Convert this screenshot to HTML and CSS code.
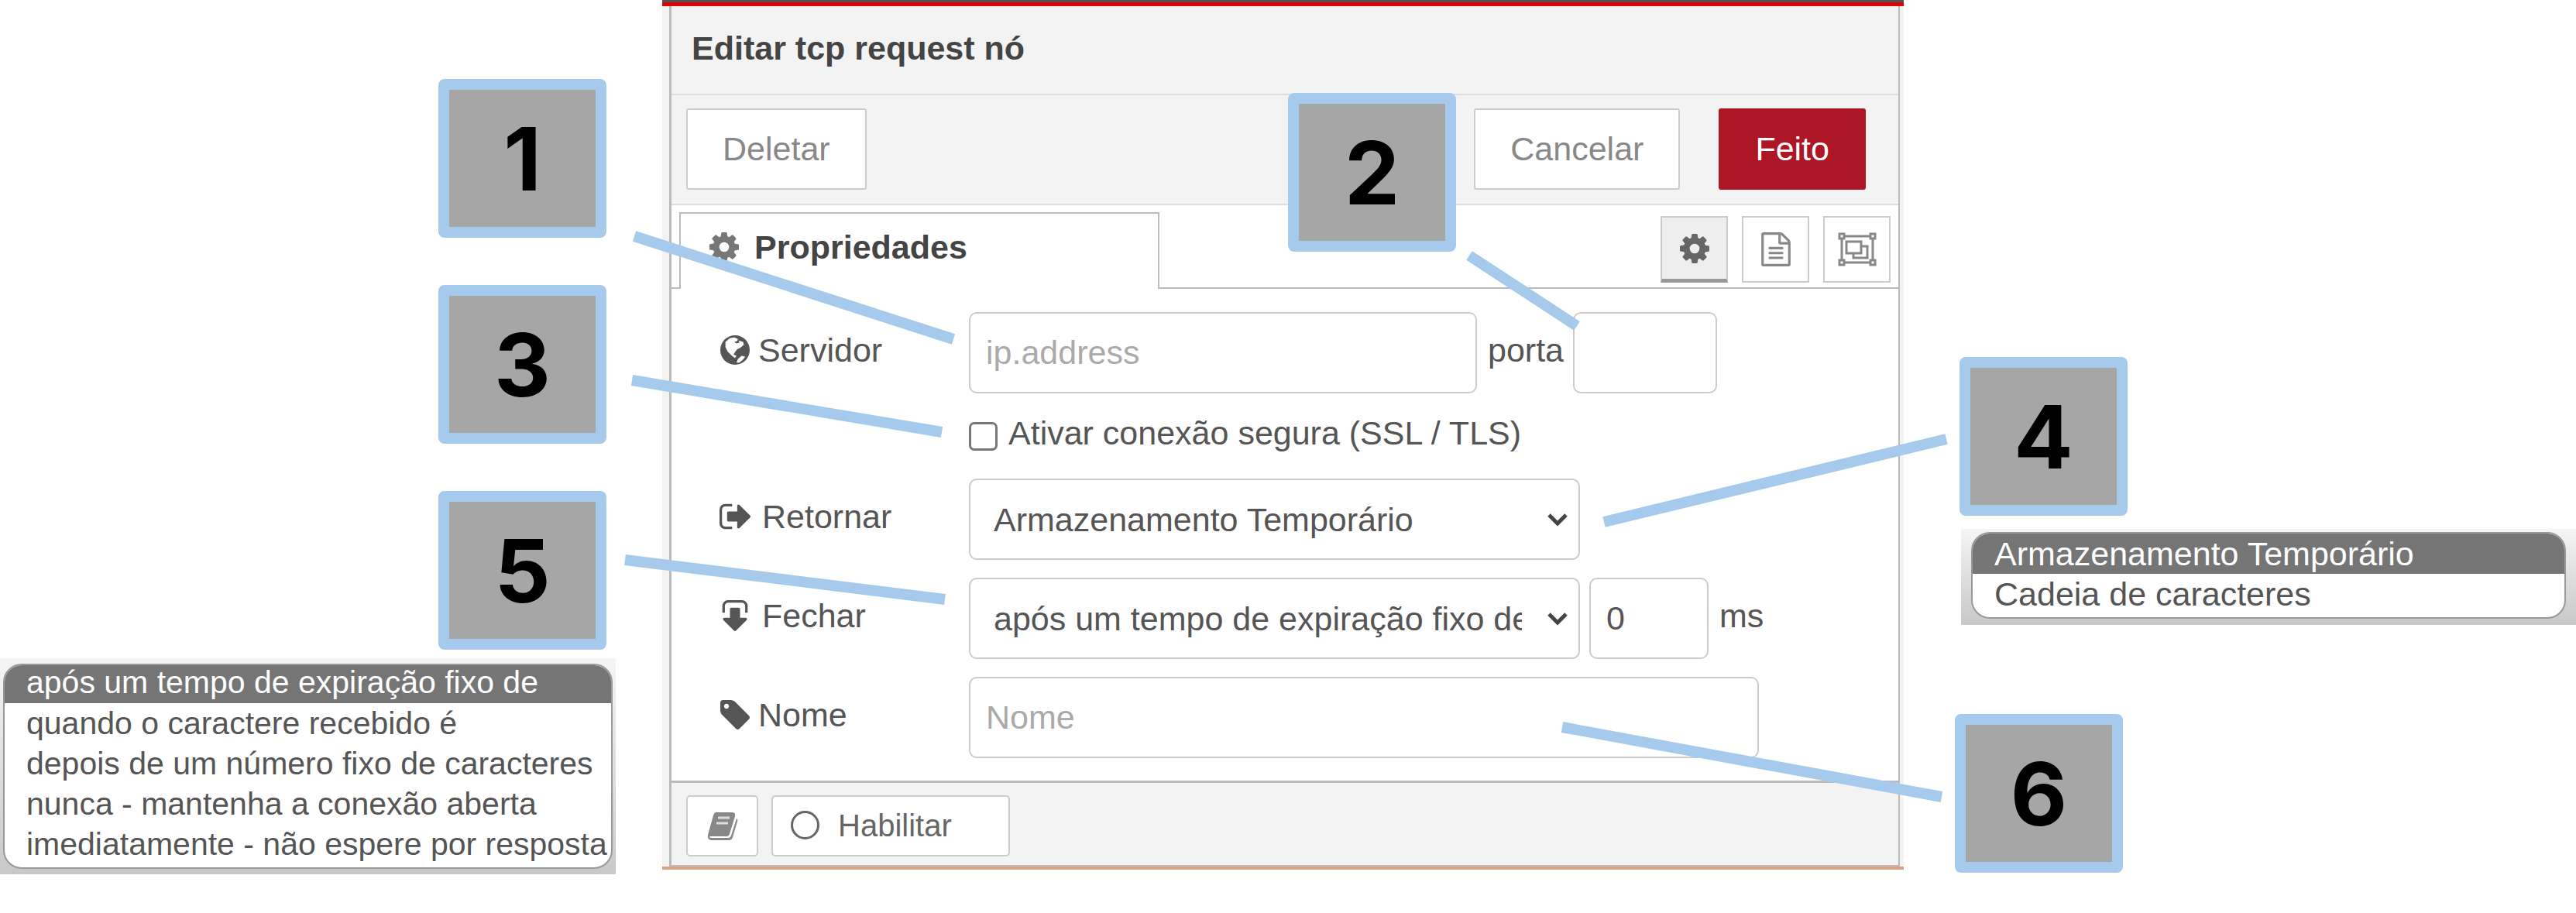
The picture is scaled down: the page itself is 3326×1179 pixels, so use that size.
FILE: index.html
```html
<!DOCTYPE html>
<html lang="pt-BR">
<head>
<meta charset="utf-8">
<title>Editar tcp request nó</title>
<link rel="stylesheet" href="styles.css">
</head>
<body>
<svg class="sprite" aria-hidden="true">
  <symbol id="cog" viewBox="128 128 1536 1536"><path d="M1152 896q0-106-75-181t-181-75-181 75-75 181 75 181 181 75 181-75 75-181zm512-109v222q0 12-8 23t-20 13l-185 28q-19 54-39 91 35 50 107 138 10 12 10 25t-9 23q-27 37-99 108t-94 71q-12 0-26-9l-138-108q-44 23-91 38-16 136-29 186-7 28-36 28h-222q-14 0-24.500-8.500t-11.500-21.500l-28-184q-49-16-90-37l-141 107q-10 9-25 9-14 0-25-11-126-114-165-168-7-10-7-23 0-12 8-23 15-21 51-66.500t54-70.500q-27-50-41-99l-183-27q-13-2-21-12.500t-8-23.500v-222q0-12 8-23t19-13l186-28q14-46 39-92-40-57-107-138-10-12-10-24 0-10 9-23 26-36 98.500-107.500t94.500-71.500q13 0 26 10l138 107q44-23 91-38 16-136 29-186 7-28 36-28h222q14 0 24.500 8.500t11.500 21.500l28 184q49 16 90 37l142-107q9-9 24-9 13 0 25 10 129 119 165 170 7 8 7 22 0 12-8 23-15 21-51 66.500t-54 70.500q26 50 41 98l183 28q13 2 21 12.500t8 23.500z"/></symbol>
  <symbol id="file" viewBox="128 0 1536 1792"><path d="M1596 380q28 28 48 76t20 88v1152q0 40-28 68t-68 28h-1344q-40 0-68-28t-28-68v-1600q0-40 28-68t68-28h896q40 0 88 20t76 48zm-444-244v376h376q-10-29-22-41l-313-313q-12-12-41-22zm384 1528v-1024h-416q-40 0-68-28t-28-68v-416h-768v1536h1280zm-1024-864q0-14 9-23t23-9h704q14 0 23 9t9 23v64q0 14-9 23t-23 9h-704q-14 0-23-9t-9-23v-64zm736 224q14 0 23 9t9 23v64q0 14-9 23t-23 9h-704q-14 0-23-9t-9-23v-64q0-14 9-23t23-9h704zm0 256q14 0 23 9t9 23v64q0 14-9 23t-23 9h-704q-14 0-23-9t-9-23v-64q0-14 9-23t23-9h704z"/></symbol>
  <symbol id="group" viewBox="0 0 50 44"><g fill="none" stroke="currentColor" stroke-width="3"><path d="M8 5H42M8 39H42M5 8V36M45 8V36"/><path d="M11 12H30V27H11Z"/><path d="M30 18H38V33H20V27"/><path d="M2 2H8V8H2ZM42 2H48V8H42ZM2 36H8V42H2ZM42 36H48V42H42Z" fill="#fff"/></g></symbol>
  <symbol id="globe" viewBox="0 0 40 40"><circle cx="20" cy="20" r="20"/><path fill="#fff" d="M7 9L13 4L19 3L24 5L23 8L19 9L22 11L26 10L25 7L31 9L32 13L27 17L23 19L20 23L18 26L22 28L20 31L15 27L10 22L7 16ZM24 32L29 28L34 29L31 33L26 37L22 37Z"/></symbol>
  <symbol id="out" viewBox="64 192 1568 1408"><path d="M704 1440q0 4 1 20t.5 26.500-3 23.500-10 19.500-20.500 6.500h-320q-119 0-203.500-84.500t-84.500-203.500v-704q0-119 84.500-203.500t203.500-84.500h320q13 0 22.500 9.500t9.500 22.500q0 4 1 20t.5 26.500-3 23.500-10 19.500-20.500 6.500h-320q-66 0-113 47t-47 113v704q0 66 47 113t113 47h312l11.500 1 11.500 3 8 5.500 7 9 2 13.500zm928-544q0 26-19 45l-544 544q-19 19-45 19t-45-19-19-45v-288h-448q-26 0-45-19t-19-45v-384q0-26 19-45t45-19h448v-288q0-26 19-45t45-19 45 19l544 544q19 19 19 45z"/></symbol>
  <symbol id="tag" viewBox="128 128 1516 1516"><path d="M576 448q0-53-37.500-90.500t-90.500-37.500-90.500 37.500-37.500 90.500 37.500 90.500 90.500 37.500 90.500-37.500 37.500-90.500zm1067 576q0 53-37 90l-491 492q-39 37-91 37-53 0-90-37l-715-716q-38-37-64.500-101t-26.500-117v-416q0-52 38-90t90-38h416q53 0 117 26.500t102 64.500l715 714q37 39 37 91z"/></symbol>
  <symbol id="book" viewBox="0 0 40 36"><path d="M12 0H32Q37 0 36 5L29 28Q28 31 25 31H5Q3 31 3 32Q4 33 6 33H27Q30 33 31 30L38 8Q40 9 39 12L33 32Q32 36 28 36H5Q0 35 1 29L8 4Q9 0 12 0Z"/><path d="M14 7H29M12 14H27" stroke="#ddd" stroke-width="3"/></symbol>
</svg>

<div class="figure">
  <aside class="side side-left">
    <div class="badge">1</div>
    <div class="badge">3</div>
    <div class="badge badge-last">5</div>
    <div class="popup popup-left">
      <ul class="options" role="listbox" aria-label="Fechar">
        <li role="option" aria-selected="true">após um tempo de expiração fixo de</li>
        <li role="option">quando o caractere recebido é</li>
        <li role="option">depois de um número fixo de caracteres</li>
        <li role="option">nunca - mantenha a conexão aberta</li>
        <li role="option">imediatamente - não espere por resposta</li>
      </ul>
    </div>
  </aside>

  <main class="editor">
    <form class="tray">
      <h1 class="title">Editar tcp request nó</h1>
      <div class="toolbar">
        <button type="button" class="btn btn-delete">Deletar</button>
        <button type="button" class="btn">Cancelar</button>
        <button type="button" class="btn btn-primary">Feito</button>
      </div>
      <div class="tabs">
        <div class="tab"><svg class="icon"><use href="#cog"/></svg>Propriedades</div>
        <div class="tab-buttons">
          <button type="button" class="tab-button active" aria-label="Propriedades"><svg class="icon"><use href="#cog"/></svg></button>
          <button type="button" class="tab-button" aria-label="Descrição"><svg class="icon icon-file"><use href="#file"/></svg></button>
          <button type="button" class="tab-button" aria-label="Aparência"><svg class="icon icon-group"><use href="#group"/></svg></button>
        </div>
      </div>
      <div class="fields">
        <div class="row">
          <label class="label" for="server"><svg class="icon"><use href="#globe"/></svg>Servidor</label>
          <input class="control server" id="server" type="text" placeholder="ip.address">
          <label class="inline" for="port">porta</label>
          <input class="control port" id="port" type="text">
        </div>
        <div class="row row-check">
          <input class="check" id="tls" type="checkbox">
          <label class="check-label" for="tls">Ativar conexão segura (SSL / TLS)</label>
        </div>
        <div class="row">
          <label class="label label-wide" for="ret"><svg class="icon icon-out"><use href="#out"/></svg>Retornar</label>
          <div class="select">
            <select class="control" id="ret"><option>Armazenamento Temporário</option><option>Cadeia de caracteres</option></select>
            <svg class="chevron" viewBox="0 0 28 18"><path d="M3 3L14 14L25 3"/></svg>
          </div>
        </div>
        <div class="row">
          <label class="label label-wide" for="close"><svg class="icon icon-out icon-down"><use href="#out"/></svg>Fechar</label>
          <div class="select">
            <select class="control" id="close"><option>após um tempo de expiração fixo de</option><option>quando o caractere recebido é</option></select>
            <svg class="chevron" viewBox="0 0 28 18"><path d="M3 3L14 14L25 3"/></svg>
          </div>
          <input class="control time" id="time" type="text" value="0" aria-label="Tempo">
          <label class="inline" for="time">ms</label>
        </div>
        <div class="row">
          <label class="label" for="name"><svg class="icon"><use href="#tag"/></svg>Nome</label>
          <input class="control name" id="name" type="text" placeholder="Nome">
        </div>
      </div>
      <div class="footer">
        <button type="button" class="small-btn book" aria-label="Ajuda"><svg class="icon"><use href="#book"/></svg></button>
        <button type="button" class="small-btn enable"><span class="ring"></span>Habilitar</button>
      </div>
    </form>
    <div class="badge badge-port">2</div>
  </main>

  <aside class="side side-right">
    <div class="badge">4</div>
    <div class="popup popup-right">
      <ul class="options" role="listbox" aria-label="Retornar">
        <li role="option" aria-selected="true">Armazenamento Temporário</li>
        <li role="option">Cadeia de caracteres</li>
      </ul>
    </div>
    <div class="badge badge-name">6</div>
  </aside>

  <svg class="leaders" viewBox="0 0 3326 1179" preserveAspectRatio="xMidYMin meet" aria-hidden="true">
    <path d="M819 305L1231 438M1897 330L2036 421M816 491L1216 558M2071 674L2513 567M807 723L1220 774M2017 939L2507 1029"/>
  </svg>
</div>
</body>
</html>
```
FILE: styles.css
```css
* { box-sizing: border-box; }

body {
  margin: 0;
  background: #fff;
  color: #555;
  font: 43px/52px "Liberation Sans", Arial, sans-serif;
}

button, input, select { font: inherit; color: inherit; }

.sprite { position: absolute; width: 0; height: 0; }
.icon { width: 40px; height: 38px; fill: currentColor; flex: none; }

.figure {
  position: relative;
  display: grid;
  grid-template-columns: 855fr 1603fr 868fr;
  align-items: start;
}

.leaders { position: absolute; top: 0; left: 0; width: 100%; pointer-events: none; }
.leaders path { fill: none; stroke: #a6caec; stroke-width: 14px; }

/* numbered markers */
.badge {
  display: flex;
  align-items: center;
  justify-content: center;
  width: 217px;
  height: 205px;
  border: 14px solid #a6caec;
  border-radius: 8px;
  background: #a6a6a6;
  color: #000;
  font: bold 113px/120px Inter, sans-serif;
}

.side { display: flex; flex-direction: column; }
.side-left { align-items: flex-end; padding-top: 102px; }
.side-left .badge { margin: 0 72px 61px 0; }
.side-left .badge-last { margin-bottom: 11px; }
.side-right { align-items: flex-start; padding: 461px 0 0 66px; }
.side-right .badge { margin: 0 0 17px 6px; }
.side-right .badge-name { margin: 115px 0 0; }
.badge-port { position: absolute; top: 117px; left: 808px; }

/* open drop-down lists */
.popup { background: linear-gradient(#f5f5f5, #c8c8c8); }
.popup-left { align-self: stretch; margin-right: 60px; padding: 7px 4px; font-size: 41px; }
.popup-right { align-self: stretch; margin-left: 8px; padding: 4px 13px 8px; }

.options {
  margin: 0;
  padding: 0 0 4px;
  list-style: none;
  overflow: hidden;
  border: 2px solid #999;
  border-radius: 24px;
  background: #fff;
}
.options li { padding-left: 28px; white-space: nowrap; }
.options li[aria-selected="true"] { background: #757575; color: #fff; }
.popup-left li[aria-selected="true"] { padding-bottom: 5px; line-height: 44px; }

/* editor tray */
.editor {
  position: relative;
  border-top: 3px solid #555;
  border-bottom: 4px solid #dba183;
  background: #f3f3f3;
  padding: 0 5px 0 9px;
}
.editor::before {
  content: "";
  display: block;
  height: 5px;
  margin: 0 -5px 0 -9px;
  background: #dc0404;
}
.tray {
  border: solid #bbb;
  border-width: 0 2px 2px 3px;
  background: #f3f3f3;
}
.title {
  margin: 0;
  padding: 28px 26px 33px;
  border-bottom: 2px solid #ddd;
  color: #444;
  font-size: 43px;
  line-height: 52px;
}
.toolbar {
  display: flex;
  align-items: center;
  gap: 50px;
  height: 142px;
  padding: 0 42px 2px 19px;
  border-bottom: 2px solid #ddd;
}
.btn {
  height: 105px;
  padding: 0 45px;
  border: 2px solid #ccc;
  border-radius: 3px;
  background: #fff;
  color: #888;
}
.btn-delete { margin-right: auto; }
.btn-primary { border-color: #ad1625; background: #ad1625; color: #fff; }

.tabs {
  display: flex;
  justify-content: space-between;
  align-items: flex-end;
  height: 108px;
  padding: 0 10px;
  background: #fff;
  box-shadow: inset 0 -2px #bbb;
}
.tab {
  display: flex;
  align-items: center;
  gap: 19px;
  width: 620px;
  height: 99px;
  padding: 0 0 11px 36px;
  border: 2px solid #bbb;
  border-bottom: 0;
  background: #fff;
  color: #444;
  font-weight: bold;
}
.tab .icon { color: #777; }
.tab-buttons { display: flex; gap: 18px; padding-bottom: 8px; }
.tab-button {
  display: flex;
  align-items: center;
  justify-content: center;
  width: 87px;
  height: 86px;
  padding: 0;
  border: 2px solid #ccc;
  background: #fff;
  color: #888;
}
.tab-button.active { border-bottom: 5px solid #999; background: #eee; color: #666; }
.icon-file { height: 44px; }
.icon-group { width: 50px; height: 44px; }

.fields {
  display: flex;
  flex-direction: column;
  gap: 23px;
  padding: 30px 38px 29px 62px;
  background: #fff;
}
.row { display: flex; align-items: center; }
.label { display: flex; align-items: center; gap: 10px; width: 322px; padding-bottom: 8px; }
.label-wide { gap: 15px; }
.icon-out { height: 36px; }
.icon-down { transform: rotate(90deg); }
.inline { padding: 0 12px 8px 14px; }

.control {
  height: 105px;
  padding: 0 20px;
  border: 2px solid #ccc;
  border-radius: 10px;
  background: #fff;
}
.control::placeholder { color: #aaa; opacity: 1; }
.server { width: 656px; }
.port { width: 186px; }
.time { width: 154px; margin-left: 12px; }
.name { width: 1020px; }

.row-check { gap: 14px; height: 64px; padding-left: 322px; }
.check-label { padding-bottom: 8px; }
.check {
  appearance: none;
  width: 37px;
  height: 37px;
  margin: 0;
  border: 3px solid #767676;
  border-radius: 7px;
  background: #fff;
}

.select { position: relative; width: 789px; }
.select .control {
  display: block;
  width: 100%;
  padding: 0 73px 0 30px;
  appearance: none;
}
.chevron { position: absolute; right: 15px; top: 44px; width: 28px; height: 18px; }
.chevron path { fill: none; stroke: #444; stroke-width: 5px; }

.footer {
  display: flex;
  gap: 17px;
  padding: 16px 19px 11px;
  border-top: 3px solid #bbb;
}
.small-btn {
  display: flex;
  align-items: center;
  justify-content: center;
  height: 79px;
  padding: 0;
  border: 2px solid #ccc;
  border-radius: 5px;
  background: #fff;
  font-size: 40px;
}
.book { width: 93px; color: #888; }
.enable { justify-content: flex-start; gap: 24px; width: 308px; padding: 0 0 2px 23px; color: #666; }
.ring { width: 37px; height: 37px; border: 3px solid #666; border-radius: 50%; }
```
